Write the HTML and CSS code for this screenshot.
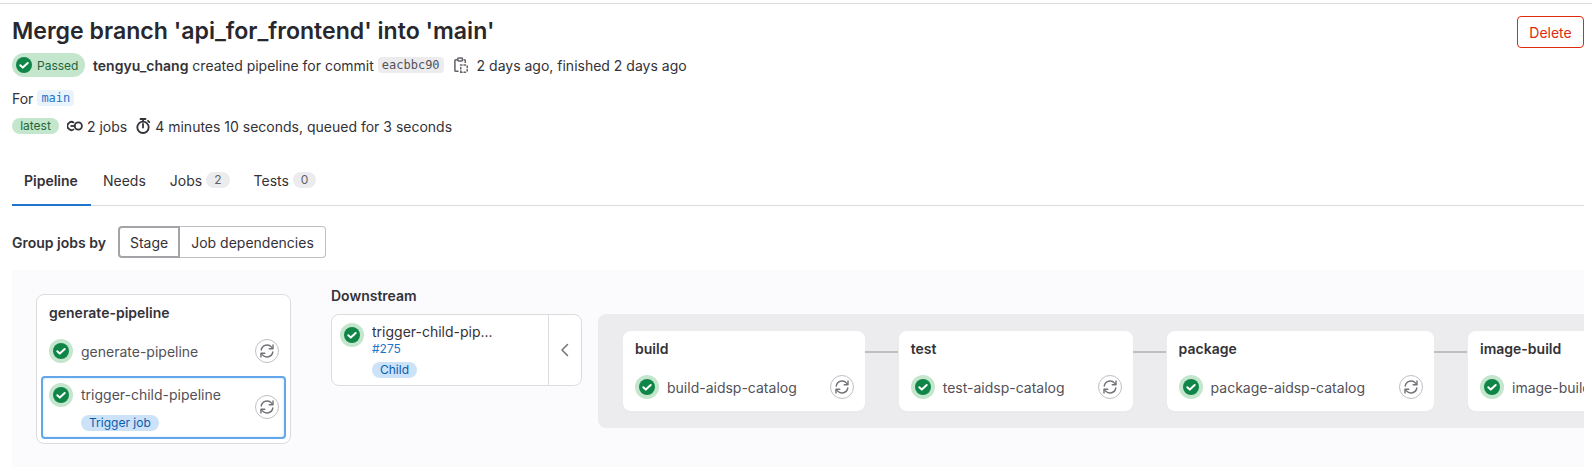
FILE: index.html
```html
<!DOCTYPE html>
<html lang="en">

<head>
    <meta charset="UTF-8">
    <title>Pipeline</title>
    <link rel="stylesheet" href="styles.css">
</head>

<body>
    <svg class="defs">
        <symbol id="status-ok" viewBox="0 0 24 24">
            <circle cx="12" cy="12" r="12" fill="#c3e6cd"/>
            <circle cx="12" cy="12" r="8" fill="#108548"/>
            <path d="M8.3 12.2l2.5 2.4 4.9-4.6" fill="none" stroke="#fff" stroke-width="2" stroke-linecap="round" stroke-linejoin="round"/>
        </symbol>
        <symbol id="retry" viewBox="0 0 16 16">
            <path d="M2.2 7A6 6 0 0 1 12.6 4.1L13.6 5.3M13.8 9A6 6 0 0 1 3.4 11.9L2.4 10.7" fill="none" stroke="#737278" stroke-width="1.4" stroke-linecap="round"/>
            <path d="M14 1.9V5.7H10.2M2 14.1V10.3H5.8" fill="none" stroke="#737278" stroke-width="1.4" stroke-linecap="round" stroke-linejoin="round"/>
        </symbol>
    </svg>

    <div class="page">
        <div class="head">
            <div class="head-info">
                <h1>Merge branch 'api_for_frontend' into 'main'</h1>
                <div class="meta meta-first">
                    <span class="status-badge">
                        <svg class="status-small" viewBox="0 0 16 16">
                            <circle cx="8" cy="8" r="8" fill="#108548"/>
                            <path d="M4.3 8.2l2.5 2.4 4.9-4.6" fill="none" stroke="#fff" stroke-width="2" stroke-linecap="round" stroke-linejoin="round"/>
                        </svg>
                        Passed
                    </span>
                    <span><b>tengyu_chang</b> created pipeline for commit</span>
                    <code class="sha">eacbbc90</code>
                    <svg class="clip" viewBox="0 0 14 16" fill="none" stroke="#626168" stroke-width="1.5">
                        <path d="M3.5 2.7H1.8a.9.9 0 0 0-.9.9v9.800c0 .5.4.9.9.9H4.500M9.500 2.700h.9c.5 0 .9.4.9.9V6"/>
                        <rect x="3.8" y="1" width="4.6" height="3" rx=".7"/>
                        <path d="M6.5 8h1.5M10 8h1.500M13.200 9v1.500M13.200 12.500v1.500M11.500 15.200H10M8 15.200H6.800V14M6.800 12v-1.500" stroke-linecap="round"/>
                    </svg>
                    <span class="ago">2 days ago, finished 2 days ago</span>
                </div>
                <div class="meta meta-for">For <code class="ref">main</code></div>
                <div class="meta meta-third">
                    <span class="latest">latest</span>
                    <svg class="jobs-icon" viewBox="0 0 16 16" fill="none" stroke="#333238" stroke-width="1.8">
                        <path d="M7 4.900A4 4 0 1 0 7 11.100"/>
                        <path d="M3.500 8h5"/>
                        <circle cx="11.300" cy="8" r="3.600"/>
                    </svg>
                    <span class="jobs-count">2 jobs</span>
                    <svg class="timer-icon" viewBox="0 0 16 16" fill="none" stroke="#333238" stroke-width="1.8">
                        <circle cx="8" cy="9.300" r="5.700"/>
                        <path d="M5.500 1h5M8 1v2.500M8 6v3.500M13 2.800l1.300 1.300" stroke-linecap="round"/>
                    </svg>
                    <span>4 minutes 10 seconds, queued for 3 seconds</span>
                </div>
            </div>
            <button class="delete">Delete</button>
        </div>

        <div class="tabs">
            <a class="tab active">Pipeline</a>
            <a class="tab">Needs</a>
            <a class="tab">Jobs <span class="count">2</span></a>
            <a class="tab">Tests <span class="count">0</span></a>
        </div>

        <div class="group-by">
            <b>Group jobs by</b>
            <div class="btn-group">
                <button class="selected">Stage</button>
                <button>Job dependencies</button>
            </div>
        </div>

        <div class="graph">
            <div class="stage-card main-stage">
                <h3>generate-pipeline</h3>
                <div class="job">
                    <svg class="status"><use href="#status-ok"/></svg>
                    <span class="job-name">generate-pipeline</span>
                    <span class="retry"><svg><use href="#retry"/></svg></span>
                </div>
                <div class="job job-trigger">
                    <svg class="status"><use href="#status-ok"/></svg>
                    <div class="job-text">
                        <span class="job-name">trigger-child-pipeline</span>
                        <span class="pill">Trigger job</span>
                    </div>
                    <span class="retry"><svg><use href="#retry"/></svg></span>
                </div>
            </div>

            <div class="downstream">
                <h3>Downstream</h3>
                <div class="child-card">
                    <svg class="status"><use href="#status-ok"/></svg>
                    <div class="child-text">
                        <span class="child-name">trigger-child-pip...</span>
                        <a class="child-id">#275</a>
                        <span class="pill">Child</span>
                    </div>
                    <div class="collapse">
                        <svg viewBox="0 0 16 16" fill="none" stroke="#737278" stroke-width="1.5" stroke-linecap="round" stroke-linejoin="round"><path d="M10.5 2.5L5 8l5.500 5.500"/></svg>
                    </div>
                </div>
            </div>

            <div class="child-pipeline">
                <div class="stage-card">
                    <h3>build</h3>
                    <div class="job">
                        <svg class="status"><use href="#status-ok"/></svg>
                        <span class="job-name">build-aidsp-catalog</span>
                        <span class="retry"><svg><use href="#retry"/></svg></span>
                    </div>
                </div>
                <div class="link"></div>
                <div class="stage-card">
                    <h3>test</h3>
                    <div class="job">
                        <svg class="status"><use href="#status-ok"/></svg>
                        <span class="job-name">test-aidsp-catalog</span>
                        <span class="retry"><svg><use href="#retry"/></svg></span>
                    </div>
                </div>
                <div class="link"></div>
                <div class="stage-card stage-wide">
                    <h3>package</h3>
                    <div class="job">
                        <svg class="status"><use href="#status-ok"/></svg>
                        <span class="job-name">package-aidsp-catalog</span>
                        <span class="retry"><svg><use href="#retry"/></svg></span>
                    </div>
                </div>
                <div class="link"></div>
                <div class="stage-card">
                    <h3>image-build</h3>
                    <div class="job">
                        <svg class="status"><use href="#status-ok"/></svg>
                        <span class="job-name">image-build-aidsp-catalog</span>
                        <span class="retry"><svg><use href="#retry"/></svg></span>
                    </div>
                </div>
            </div>
        </div>
    </div>
</body>

</html>
```

FILE: styles.css
```css
* {
    box-sizing: border-box;
}

html,
body {
    margin: 0;
    height: 467px;
    overflow: hidden;
    background: #fff;
}

body {
    font-family: Inter, "Noto Sans", sans-serif;
    font-size: 14px;
    color: #333238;
}

.defs {
    display: none;
}

.page {
    margin-top: 3px;
    padding: 0 8px 0 12px;
    border-top: 1px solid #dcdcde;
}

.head {
    display: flex;
    justify-content: space-between;
    padding-top: 12px;
    height: 148px;
}

h1 {
    margin: 1px 0 0;
    font-size: 23.1px;
    line-height: 28px;
    font-weight: 600;
    color: #28272d;
}

.meta {
    display: flex;
    align-items: center;
}

.meta-first {
    height: 24px;
    margin-top: 8px;
}

.status-badge {
    display: flex;
    align-items: center;
    gap: 5px;
    height: 24px;
    width: 73px;
    padding-left: 4px;
    border-radius: 12px;
    background: #c3e6cd;
    color: #24663b;
    font-size: 12px;
    margin-right: 8px;
}

.status-small {
    width: 16px;
    height: 16px;
}

b {
    font-weight: 600;
}

.sha,
.ref {
    font-family: "DejaVu Sans Mono", "Liberation Mono", monospace;
    font-size: 12px;
    border-radius: 4px;
    padding: 0 4px;
    height: 16px;
    line-height: 16px;
}

.sha {
    background: #ececef;
    color: #535158;
    margin-left: 4px;
}

.clip {
    width: 14px;
    height: 16px;
    margin-left: 10px;
}

.ago {
    margin-left: 9px;
}

.meta-for {
    height: 16px;
    margin-top: 13px;
}

.ref {
    background: #e9f3fc;
    color: #1f75cb;
    margin-left: 4px;
}

.meta-third {
    height: 20px;
    margin-top: 10px;
}

.latest {
    height: 16px;
    line-height: 16px;
    width: 47px;
    text-align: center;
    border-radius: 8px;
    background: #c3e6cd;
    color: #24663b;
    font-size: 12px;
}

.jobs-icon {
    width: 16px;
    height: 16px;
    margin-left: 8px;
}

.jobs-count {
    margin-left: 4px;
}

.timer-icon {
    width: 16px;
    height: 16px;
    margin: 0 4px 0 8px;
}

.delete {
    width: 67px;
    height: 32px;
    border: 1px solid #dd2b0e;
    border-radius: 4px;
    background: #fff;
    color: #dd2b0e;
    font: 14px Inter, sans-serif;
    flex: none;
}

.tabs {
    display: flex;
    height: 54px;
    border-bottom: 1px solid #dcdcde;
}

.tab {
    display: flex;
    align-items: center;
    gap: 4px;
    padding: 2px 12px 0;
    height: 54px;
}

.tab.active {
    width: 79px;
    font-weight: 600;
    box-shadow: inset 0 -2px 0 #1f75cb;
}

.count {
    height: 16px;
    min-width: 23px;
    padding: 0 8px;
    line-height: 16px;
    border-radius: 8px;
    background: #ececef;
    color: #626168;
    font-size: 12px;
    text-align: center;
}

.group-by {
    display: flex;
    align-items: center;
    gap: 12px;
    height: 32px;
    margin-top: 20px;
}

.btn-group {
    display: flex;
}

.btn-group button {
    height: 32px;
    padding: 0 11px;
    background: #fff;
    border: 1px solid #bfbfc3;
    border-left: 0;
    border-radius: 0 4px 4px 0;
    color: #333238;
    font: 14px Inter, sans-serif;
}

.btn-group .selected {
    border: 2px solid #a4a3a8;
    border-radius: 4px 0 0 4px;
    padding: 0 10px;
}

.graph {
    display: flex;
    align-items: flex-start;
    margin-top: 12px;
    height: 200px;
    padding: 24px 0 0 24px;
    background: #fbfafd;
    overflow: hidden;
}

h3 {
    margin: 0;
    font-size: 14px;
    line-height: 20px;
    font-weight: 600;
}

.stage-card {
    flex: none;
    background: #fff;
    border-radius: 8px;
    padding: 8px 11px 0 12px;
    height: 80px;
    box-shadow: 0 0 0 1px #ececef, 0 1px 2px rgba(0, 0, 0, 0.05);
}

.stage-card .job {
    margin-top: 16px;
}

.job {
    display: flex;
    align-items: center;
}

.status {
    flex: none;
    width: 24px;
    height: 24px;
}

.job-name {
    margin-left: 8px;
    color: #535158;
    white-space: nowrap;
}

.retry {
    flex: none;
    width: 24px;
    height: 24px;
    margin-left: auto;
    border: 1px solid #bfbfc3;
    border-radius: 50%;
    display: flex;
    align-items: center;
    justify-content: center;
}

.retry svg {
    width: 16px;
    height: 16px;
}

.child-pipeline .retry {
    margin-left: 33px;
}

.child-pipeline .stage-wide .retry {
    margin-left: 34px;
}

.main-stage {
    width: 255px;
    height: 150px;
    padding: 8px 4px 0;
    box-shadow: none;
    border: 1px solid #dcdcde;
}

.main-stage h3 {
    margin-left: 8px;
}

.main-stage .job {
    margin-top: 16px;
    padding: 0 7px 0 8px;
}

.main-stage .job-trigger {
    margin-top: 13px;
    height: 63px;
    width: 245px;
    padding: 5px 5px 0 6px;
    align-items: flex-start;
    border: 2px solid #63a6e9;
    border-radius: 4px;
    box-shadow: inset 0 0 3px #cbe2f9;
}

.job-trigger .retry {
    margin-top: 12px;
}

.job-text {
    display: flex;
    flex-direction: column;
    align-items: flex-start;
    gap: 11px;
}

.job-trigger .job-text .job-name {
    line-height: 18px;
    margin-top: 3px;
}

.job-trigger .pill {
    margin-left: 8px;
}

.pill {
    height: 16px;
    line-height: 16px;
    padding: 0 8px;
    border-radius: 8px;
    background: #cbe2f9;
    color: #0b5cad;
    font-size: 12px;
}

.downstream {
    flex: none;
    width: 251px;
    margin-left: 40px;
}

.downstream h3 {
    margin: -8px 0 8px;
}

.child-card {
    display: flex;
    height: 72px;
    padding: 8px 0 0 8px;
    background: #fff;
    border: 1px solid #dcdcde;
    border-radius: 8px;
}

.child-text {
    display: flex;
    flex-direction: column;
    align-items: flex-start;
    margin-left: 8px;
}

.child-name {
    line-height: 16px;
    margin-top: 1px;
}

.child-id {
    font-size: 12px;
    line-height: 16px;
    margin-top: 1px;
    color: #1f75cb;
}

.child-text .pill {
    margin-top: 5px;
}

.collapse {
    margin-left: auto;
    margin-top: -8px;
    width: 33px;
    border-left: 1px solid #dcdcde;
    display: flex;
    align-items: center;
    justify-content: center;
}

.collapse svg {
    width: 16px;
    height: 16px;
}

.child-pipeline {
    flex: none;
    display: flex;
    align-items: flex-start;
    width: 986px;
    height: 114px;
    margin: 20px 0 0 16px;
    padding: 17px 0 0 25px;
    background: #ececef;
    border-radius: 8px 0 0 8px;
    overflow: hidden;
}

.link {
    flex: none;
    width: 34px;
    height: 2px;
    margin-top: 20px;
    background: #bfbfc3;
}
```
